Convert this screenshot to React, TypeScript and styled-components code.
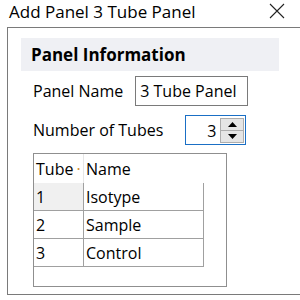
import * as React from 'react';
import styled, { createGlobalStyle } from 'styled-components';

const GlobalStyle = createGlobalStyle`
  html, body {
    margin: 0;
    padding: 0;
    background: #ffffff;
  }
  body {
    font-family: 'Open Sans', 'Noto Sans', sans-serif;
    color: #000000;
  }
`;

const tubes = [
  { id: '1', name: 'Isotype' },
  { id: '2', name: 'Sample' },
  { id: '3', name: 'Control' },
];

export default function App() {
  return (
    <>
      <GlobalStyle />
      <Window>
        <TitleBar>
          <Title>Add Panel 3 Tube Panel</Title>
          <CloseIcon width="16" height="16" viewBox="0 0 16 16">
            <path d="M1 1 L15 15 M15 1 L1 15" stroke="#222" strokeWidth="1.1" fill="none" />
          </CloseIcon>
        </TitleBar>
        <GroupBox>
          <Header>Panel Information</Header>
          <FieldRow $gap={12} $top={5}>
            <Label>Panel Name</Label>
            <TextBox>3 Tube Panel</TextBox>
          </FieldRow>
          <FieldRow $gap={22} $top={9}>
            <Label>Number of Tubes</Label>
            <SpinBox>
              <SpinValue>3</SpinValue>
              <SpinButtons>
                <SpinButton>
                  <svg width="9" height="5" viewBox="0 0 9 5">
                    <path d="M4.5 0 L9 5 L0 5 Z" fill="#000" />
                  </svg>
                </SpinButton>
                <SpinButton>
                  <svg width="9" height="5" viewBox="0 0 9 5">
                    <path d="M0 0 L9 0 L4.5 5 Z" fill="#000" />
                  </svg>
                </SpinButton>
              </SpinButtons>
            </SpinBox>
          </FieldRow>
          <Grid>
            <HeadRow>
              <HeadCell $w={50}>
                Tube<Trunc>·</Trunc>
              </HeadCell>
              <HeadCell $w={120} $last>
                Name
              </HeadCell>
            </HeadRow>
            {tubes.map((t, i) => (
              <Row key={t.id}>
                <Cell $w={50} $selected={i === 0}>
                  {t.id}
                </Cell>
                <Cell $w={120}>{t.name}</Cell>
              </Row>
            ))}
          </Grid>
        </GroupBox>
      </Window>
    </>
  );
}

const Window = styled.div`
  width: 300px;
  height: 300px;
  display: flex;
  flex-direction: column;
  background: #ffffff;
  overflow: hidden;
`;

const TitleBar = styled.div`
  height: 27px;
  display: flex;
  align-items: center;
  justify-content: space-between;
  padding: 0 15px 0 9px;
`;

const Title = styled.span`
  font-size: 17px;
  line-height: 20px;
  color: #000;
  margin-top: -3px;
`;

const CloseIcon = styled.svg`
  display: block;
  margin-top: -6px;
`;

const GroupBox = styled.div`
  margin-left: 7px;
  width: 282px;
  height: 256px;
  border: 1px solid #7a7a7a;
  padding: 10px 0 0 13px;
  box-sizing: content-box;
  display: flex;
  flex-direction: column;
`;

const Header = styled.div`
  width: 248px;
  height: 33px;
  flex-shrink: 0;
  padding-left: 10px;
  background: #eff0f4;
  font-size: 17px;
  font-weight: 700;
  display: flex;
  align-items: center;
`;

const FieldRow = styled.div<{ $gap: number; $top: number }>`
  display: flex;
  align-items: center;
  margin-left: 12px;
  margin-top: ${(p) => p.$top}px;
  gap: ${(p) => p.$gap}px;
  flex-shrink: 0;
`;

const Label = styled.span`
  font-size: 16px;
`;

const TextBox = styled.div`
  width: 107px;
  height: 28px;
  border: 1px solid #7a7a7a;
  padding-left: 4px;
  font-size: 16px;
  display: flex;
  align-items: center;
`;

const SpinBox = styled.div`
  box-sizing: border-box;
  width: 61px;
  height: 30px;
  border: 1px solid #1a6fc5;
  display: flex;
  align-items: stretch;
  padding: 2px 1px 1px 0;
`;

const SpinValue = styled.div`
  flex: 1;
  font-size: 16px;
  display: flex;
  align-items: center;
  justify-content: flex-end;
  padding-right: 4px;
`;

const SpinButtons = styled.div`
  width: 24px;
  display: flex;
  flex-direction: column;
`;

const SpinButton = styled.div`
  flex: 1;
  background: #e5e5e5;
  border: 1px solid #adadad;
  display: flex;
  align-items: center;
  justify-content: center;
  & + & {
    border-top: none;
  }
`;

const Grid = styled.div`
  margin-left: 12px;
  margin-top: 8px;
  width: 192px;
  height: 132px;
  flex-shrink: 0;
  border: 1px solid #8f8f8f;
  display: flex;
  flex-direction: column;
`;

const HeadRow = styled.div`
  height: 29px;
  display: flex;
`;

const HeadCell = styled.div<{ $w: number; $last?: boolean }>`
  width: ${(p) => p.$w}px;
  box-sizing: border-box;
  border-right: ${(p) => (p.$last ? 'none' : '1px solid #e6e6e6')};
  padding-left: 2px;
  font-size: 16px;
  display: flex;
  align-items: center;
  white-space: nowrap;
  overflow: hidden;
`;

const Trunc = styled.span`
  color: #d08a2a;
  margin-left: 3px;
`;

const Row = styled.div`
  height: 28px;
  display: flex;
`;

const Cell = styled.div<{ $w: number; $selected?: boolean }>`
  width: ${(p) => p.$w}px;
  box-sizing: border-box;
  border-right: 1px solid #a0a0a0;
  border-bottom: 1px solid #a0a0a0;
  background: ${(p) => (p.$selected ? '#f0f0f0' : '#ffffff')};
  padding-left: 2px;
  font-size: 16px;
  display: flex;
  align-items: center;
`;
